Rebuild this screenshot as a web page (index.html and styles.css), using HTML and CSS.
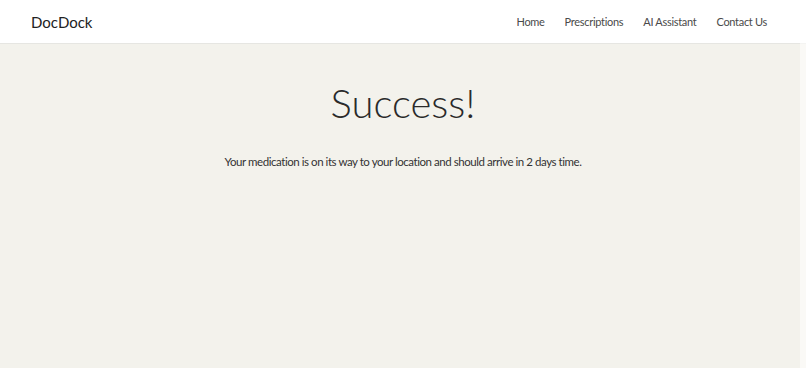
FILE: index.html
```html
<!DOCTYPE html>
<html lang="en">
<head>
    <meta charset="UTF-8">
    <meta name="viewport" content="width=device-width, initial-scale=1.0">
    <title>DocDock - Success</title>
    <link rel="stylesheet" href="styles.css">
</head>
<body>
    <nav class="topbar">
        <a class="brand" href="#">DocDock</a>
        <div class="nav-links">
            <a href="#">Home</a>
            <a href="#">Prescriptions</a>
            <a href="#">AI Assistant</a>
            <a href="#">Contact Us</a>
        </div>
    </nav>

    <main class="content">
        <h1>Success!</h1>
        <p>Your medication is on its way to your location and should arrive in 2 days time.</p>
    </main>

    <div class="scroll-strip"></div>
</body>
</html>
```

FILE: styles.css
```css
/* Reset */
* {
    margin: 0;
    padding: 0;
    box-sizing: border-box;
}

html, body {
    height: 100%;
}

body {
    font-family: 'Lato', 'Open Sans', sans-serif;
    background-color: #f3f2ec;
    color: #333;
}

/* Navbar */
.topbar {
    height: 44px;
    background: #ffffff;
    border-bottom: 1px solid #e6e6e2;
    display: flex;
    align-items: center;
    justify-content: space-between;
    padding: 0 39px 0 31px;
}

.brand {
    font-size: 15px;
    color: #222;
    text-decoration: none;
}

.nav-links {
    display: flex;
    gap: 20px;
}

.nav-links a {
    font-size: 11px;
    letter-spacing: -0.3px;
    color: #4a4a4a;
    text-decoration: none;
}

/* Main content */
.content {
    text-align: center;
    padding-top: 31px;
}

.content h1 {
    font-size: 40px;
    font-weight: 300;
    color: #2a2a2a;
    line-height: 56px;
}

.content p {
    margin-top: 24px;
    font-size: 11.5px;
    letter-spacing: -0.45px;
    color: #333;
}

/* Overlay scrollbar track on the right edge */
.scroll-strip {
    position: fixed;
    top: 0;
    right: 0;
    bottom: 0;
    width: 6px;
    background: rgba(255, 255, 255, 0.55);
}
```
